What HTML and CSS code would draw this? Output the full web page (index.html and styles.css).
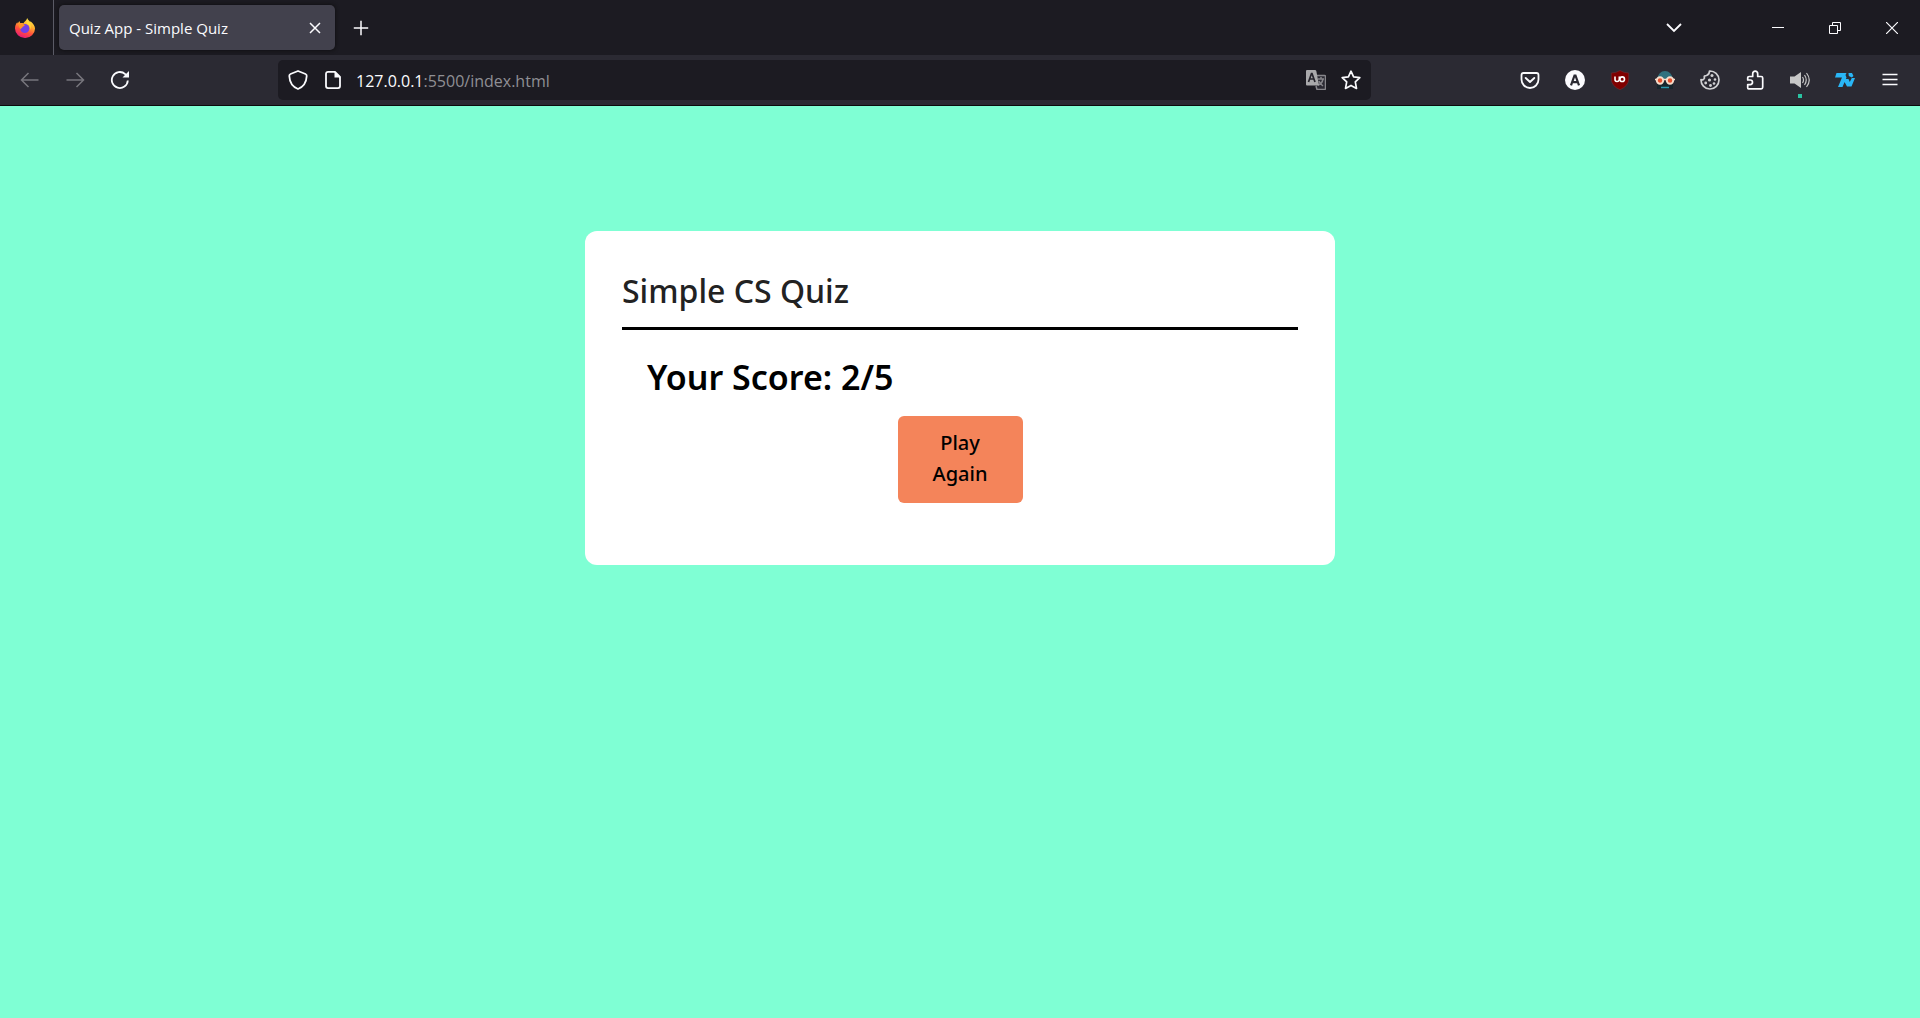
FILE: index.html
```html
<!DOCTYPE html>
<html lang="en">
<head>
<meta charset="utf-8">
<meta name="viewport" content="width=device-width, initial-scale=1">
<title>Quiz App - Simple Quiz</title>
<link rel="stylesheet" href="styles.css">
</head>
<body>
<header class="browser">
  <div class="tab-strip">
    <button class="firefox-view" aria-label="Firefox View">
      <svg class="icon" viewBox="0 0 20 20">
        <defs>
          <linearGradient id="flame" x1="0.75" y1="0" x2="0.3" y2="1">
            <stop offset="0" stop-color="#fff44f"/><stop offset=".35" stop-color="#ffb02e"/><stop offset=".65" stop-color="#ff4f3d"/><stop offset="1" stop-color="#e5177b"/>
          </linearGradient>
        </defs>
        <path fill="url(#flame)" d="M12.2 0c.6 1.700 1.700 2.500 2.800 3.700l.8-.3c2.600 2.200 4.200 4.600 4.200 7.100A9.800 9.400 0 0 1 10 20 9.900 9.600 0 0 1 0 10.500C0 8 .8 5.900 2.300 4.200l.5 1.200L4.300 3l1 2.300c1-.3 2-.2 3 .1C9.500 3.500 11.500 2.600 12.200 0z"/>
        <circle cx="9.800" cy="10.500" r="4.600" fill="#7140e8"/>
        <path fill="#ff9128" d="M3.700 5.600c2.700-.8 4.800.2 6.200 2L7.700 8.800c-.4 1.200-1.400 1.400-2.200 2.400-1.100-1.300-2-3.200-1.800-5.600z"/>
        <path fill="#ffd83a" d="M11.500 5.500c2.500 1 4 3.500 3.400 6.500 1.700-3 .8-6-.6-7.600L12.200 2z"/>
      </svg>
    </button>
    <div class="tab">
      <span class="tab-title">Quiz App - Simple Quiz</span>
      <button class="tab-close" aria-label="Close tab">
        <svg class="glyph" viewBox="0 0 12 12"><path d="M1 1l10 10M11 1L1 11"/></svg>
      </button>
    </div>
    <button class="new-tab" aria-label="New tab">
      <svg class="glyph-large" viewBox="0 0 16 16"><path d="M8 .8v14.400M.8 8h14.400"/></svg>
    </button>
    <button class="tab-list" aria-label="List all tabs">
      <svg class="glyph-large" viewBox="0 0 16 16"><path stroke-width="1.800" d="M1 4l7 7 7-7"/></svg>
    </button>
    <div class="window-controls">
      <button class="window-button" aria-label="Minimize"><svg class="glyph" viewBox="0 0 12 12"><path stroke-width="1" d="M0 5.500h12"/></svg></button>
      <button class="window-button" aria-label="Restore"><svg class="glyph" viewBox="0 0 12 12"><path stroke-width="1" d="M.5 3.500h8v8h-8zM3.500 3V.5h8v8H9"/></svg></button>
      <button class="window-button" aria-label="Close"><svg class="glyph" viewBox="0 0 12 12"><path stroke-width="1.200" d="M0 0l12 12m0-12L0 12"/></svg></button>
    </div>
  </div>

  <div class="toolbar">
    <nav class="tool-group" aria-label="Navigation">
      <button class="tool dim" aria-label="Back"><svg class="icon" viewBox="0 0 20 20"><path d="M18.500 10h-17M8.500 3l-7 7 7 7"/></svg></button>
      <button class="tool dim" aria-label="Forward"><svg class="icon" viewBox="0 0 20 20"><path d="M1.500 10h17M11.500 3l7 7-7 7"/></svg></button>
      <button class="tool" aria-label="Reload"><svg class="icon" viewBox="0 0 20 20"><path stroke-width="1.800" d="M17.800 10.500a8 8 0 1 1-2.600-6.400l1.600 1.700"/><path fill="currentColor" stroke="none" d="M19 1v6.500h-6.500z"/></svg></button>
    </nav>
    <div class="spacer"></div>
    <div class="url-bar">
      <button class="url-tool" aria-label="Tracking protection"><svg class="icon" viewBox="0 0 20 20"><path stroke-width="1.800" stroke-linejoin="round" d="M10 1L17.500 4c1 .4 1.300 1 1.200 2C18.400 12.500 15 17 10 19 5 17 1.600 12.500 1.300 6c-.1-1 .2-1.600 1.200-2z"/></svg></button>
      <button class="url-tool" aria-label="Site information"><svg class="icon" viewBox="0 0 20 20"><path stroke-width="1.800" stroke-linejoin="round" d="M12 1.900H5a2 2 0 0 0-2 2v12.200a2 2 0 0 0 2 2h10a2 2 0 0 0 2-2V7z"/><path fill="currentColor" stroke="none" d="M11.500 1.500V7.500H17.500z"/></svg></button>
      <a class="address" href="#"><span class="host">127.0.0.1</span>:5500/index.html</a>
      <button class="url-tool" aria-label="Translate page"><svg class="icon" viewBox="0 0 20 20"><path fill="#2b2a33" stroke="#87868b" d="M8 5.500h10.500q1 0 1 1v12q0 1-1 1H11l-1-3.500"/><path stroke="#87868b" d="M12 9h6m-3-2v2m2 0q-1 5-5 6m1-4q1 3 4 5"/><path fill="#a9a9ab" stroke="none" d="M1 0h8q1 0 1.300 1L13 15.500H1q-1 0-1-1V1q0-1 1-1z"/><path stroke="#25242c" stroke-width="1.700" d="M2.500 12L5.500 3.500h.5L9 12M3.700 9h4.200"/></svg></button>
      <button class="url-tool" aria-label="Bookmark this page"><svg class="icon" viewBox="0 0 20 20"><path stroke-width="1.700" stroke-linejoin="round" d="M10 1.200l2.600 5.600 6.200.8-4.500 4.300 1.200 6.500-5.500-3-5.500 3 1.200-6.500L1.200 7.600l6.200-.8z"/></svg></button>
    </div>
    <div class="spacer"></div>
    <div class="tool-group">
      <button class="tool" aria-label="Pocket"><svg class="icon" viewBox="0 0 20 20"><path stroke-width="1.800" stroke-linejoin="round" d="M3.500 3h13q2 0 2 2v4.500a8.500 8.500 0 0 1-17 0V5q0-2 2-2z"/><path stroke-width="1.900" stroke-linecap="round" stroke-linejoin="round" d="M5.700 8l4.300 4 4.300-4"/></svg></button>
      <button class="tool" aria-label="Account"><svg class="icon" viewBox="0 0 20 20"><circle cx="10" cy="10" r="10" fill="#fbfbfe" stroke="none"/><path stroke="#2b2a33" stroke-width="2.200" d="M6 15.300L9.500 5.500h1L14 15.300M7.200 12.200h5.600"/></svg></button>
      <button class="tool" aria-label="uBlock Origin"><svg class="icon" viewBox="0 0 20 20"><path fill="#800000" stroke="#6a3038" stroke-width=".6" d="M10 .5q4 2.500 8.700 2.500v6q0 7-8.700 10.700Q1.300 16 1.300 9V3Q6 3 10 .5z"/><path stroke="#fff" stroke-width="1.600" d="M5 6.500v3q0 2 2 2t2.300-2v-3"/><circle cx="12.200" cy="9.200" r="2.300" stroke="#fff" stroke-width="1.600"/></svg></button>
      <button class="tool" aria-label="Disguise extension"><svg class="icon" viewBox="0 0 20 20"><path fill="#30717e" stroke="none" d="M2.500 10V9a7.500 8 0 0 1 15 0v1z"/><path fill="#18262d" stroke="none" d="M2 12h16v7H2z"/><path stroke="#2c98ad" stroke-width="1.500" d="M6 17.500h8"/><path stroke="#f6dcca" stroke-width="1.500" d="M0 9.500h20"/><circle cx="5" cy="10.500" r="3.200" fill="#e54f2d" stroke="#f6dcca" stroke-width="1.900"/><circle cx="15" cy="10.500" r="3.200" fill="#e54f2d" stroke="#f6dcca" stroke-width="1.900"/></svg></button>
      <button class="tool soft" aria-label="Cookies"><svg class="icon" viewBox="0 0 20 20"><path stroke-width="1.700" stroke-linejoin="round" d="M9.500 1A9 9 0 1 1 1 9.500q2.500 1 3.500-1.500Q3.500 5.500 6.500 5.500 9.500 4.500 9.500 1z"/><g fill="currentColor" stroke="none"><circle cx="12" cy="5.500" r="1.500"/><circle cx="9.500" cy="10" r="1.600"/><circle cx="15" cy="9.500" r="1.300"/><circle cx="5.700" cy="13" r="1.400"/><circle cx="10.500" cy="15.500" r="1.400"/><circle cx="14" cy="13.500" r="1.300"/></g></svg></button>
      <button class="tool" aria-label="Extensions"><svg class="icon" viewBox="0 0 20 20"><path stroke-width="1.700" stroke-linejoin="round" d="M3.500 18.800h12.700q1.500 0 1.500-1.500V8q0-1.500-1.500-1.500h-3.500V3.700a2.500 2.500 0 0 0-5 0v2.800H4.200Q2.700 6.500 2.700 8v2h2.500a2.300 2.300 0 0 1 0 4.600H2.700v3.200q0 1 .8 1z"/></svg></button>
      <button class="tool sound" aria-label="Volume"><svg class="icon" viewBox="0 0 20 20"><path fill="currentColor" stroke="none" d="M0 6.500h4.500L11 2v16l-6.500-4.500H0z"/><path stroke-width="1.200" d="M12.500 7q2 3 0 6M14.500 5q3.500 5 0 10M16.500 3q5.500 7 0 14"/></svg></button>
      <button class="tool" aria-label="7TV"><svg class="icon" viewBox="0 0 20 20"><path fill="#29b6f6" stroke="none" d="M1.500 3h10l-1 2 1 2.500L7.500 17H3l4-9.500H0zM13.500 3H17l1.500 3-1.700 1.500-3-1.500zM10 9h3.500l1.300 3 2-4H20l-3.500 8.500H12L9 11z"/></svg></button>
      <button class="tool" aria-label="Open application menu"><svg class="icon" viewBox="0 0 20 20"><path d="M2.500 4.500h15m-15 5h15m-15 5h15"/></svg></button>
    </div>
  </div>
</header>

<main class="page">
  <section class="quiz-card">
    <h1 class="quiz-title">Simple CS Quiz</h1>
    <div class="quiz-body">
      <h2 class="score">Your Score: 2/5</h2>
      <button class="play-again">Play Again</button>
    </div>
  </section>
</main>
</body>
</html>
```
FILE: styles.css
```css
* {
  box-sizing: border-box;
}

body {
  margin: 0;
  min-height: 100vh;
  background: #7fffd4;
  font-family: "Noto Sans", "Open Sans", sans-serif;
}

button {
  margin: 0;
  padding: 0;
  border: 0;
  background: none;
  color: inherit;
  font: inherit;
}

svg {
  display: block;
  fill: none;
  stroke: currentColor;
  stroke-width: 1.5;
}

.browser {
  background: #1c1b22;
  color: #fbfbfe;
  font-family: "Open Sans", "Noto Sans", sans-serif;
}

.icon {
  width: 20px;
  height: 20px;
}

.glyph {
  width: 12px;
  height: 12px;
}

.glyph-large {
  width: 16px;
  height: 16px;
}

.tab-strip {
  display: flex;
  align-items: center;
  height: 55px;
}

.firefox-view {
  display: flex;
  align-items: center;
  align-self: stretch;
  padding: 0 18px 0 15px;
  border-right: 1px solid #5b5b66;
}

.firefox-view svg {
  stroke: none;
}

.tab {
  display: flex;
  align-items: center;
  justify-content: space-between;
  width: 276px;
  height: 45px;
  margin-left: 5px;
  padding: 0 14px 0 10px;
  border-radius: 5px;
  background: #42414d;
  box-shadow: 0 0 4px #0c0c0d;
}

.tab-title {
  font-size: 15px;
  line-height: 20px;
}

.new-tab {
  margin-left: 18px;
}

.tab-list {
  margin: 0 67px 0 auto;
}

.window-controls {
  display: flex;
  align-self: stretch;
}

.window-button {
  display: grid;
  place-items: center;
  width: 57px;
}

.toolbar {
  display: flex;
  align-items: center;
  height: 51px;
  padding: 0 8px 0 7px;
  border-bottom: 1px solid #0c0c0d;
  background: #2b2a33;
}

.tool-group {
  display: flex;
}

.tool {
  display: grid;
  place-items: center;
  width: 45px;
  height: 40px;
}

.dim {
  color: #77767d;
}

.soft {
  color: #d0d0d3;
}

.sound {
  position: relative;
  color: #c6c6c6;
}

.sound::after {
  position: absolute;
  bottom: 2px;
  left: 21px;
  width: 4px;
  height: 4px;
  background: #2ac3a2;
  content: "";
}

.spacer {
  flex: 1;
}

.url-bar {
  display: flex;
  flex: 8;
  align-items: center;
  height: 40px;
  padding: 0 3px 0 2px;
  border-radius: 5px;
  background: #1c1b22;
}

.url-tool {
  display: grid;
  place-items: center;
  width: 35px;
  height: 35px;
}

.address {
  flex: 1;
  padding: 2px 0 0 6px;
  color: #8f8f94;
  font-size: 16px;
  line-height: 24px;
  text-decoration: none;
}

.host {
  color: #fbfbfe;
}

.page {
  padding: 125px 24px;
}

.quiz-card {
  max-width: 750px;
  margin: 0 auto;
  padding: 38px 37px 62px;
  border-radius: 12px;
  background: #fff;
}

.quiz-title {
  margin: 0;
  padding-bottom: 14px;
  border-bottom: 3px solid #000;
  color: #222;
  font-size: 32px;
  font-weight: 500;
  line-height: 44px;
}

.quiz-body {
  padding: 25px 25px 0;
}

.score {
  margin: 0;
  font-size: 34px;
  font-weight: 600;
  line-height: 44px;
}

.play-again {
  display: block;
  width: 125px;
  margin: 17px auto 0;
  padding: 11px 25px 14px;
  border-radius: 6px;
  background: #f4845a;
  color: #000;
  font-size: 20px;
  font-weight: 500;
  line-height: 31px;
}
```
